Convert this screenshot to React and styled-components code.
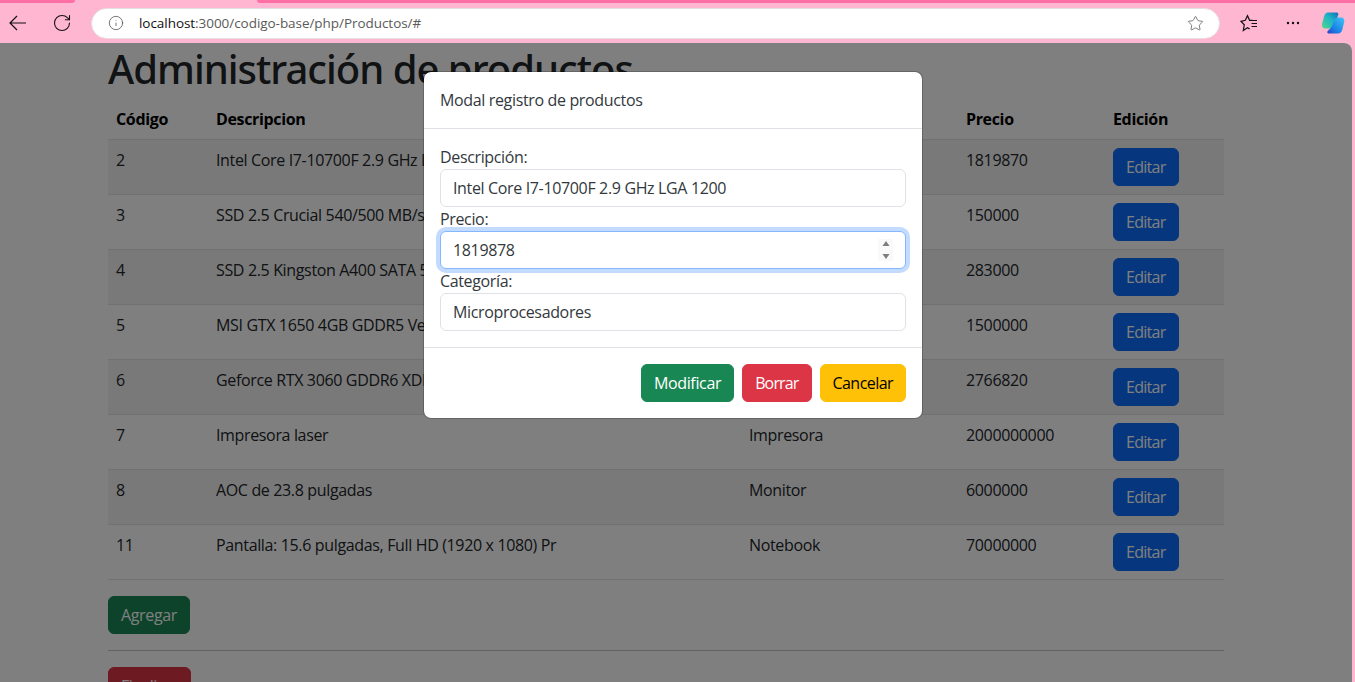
import React from "react";
import styled, { createGlobalStyle } from "styled-components";
import { Info, RotateCw, Star } from "lucide-react";

const products = [
  { id: 2, name: "Intel Core I7-10700F 2.9 GHz LGA 1200", category: "Microprocesadores", price: 1819870 },
  { id: 3, name: "SSD 2.5 Crucial 540/500 MB/s SATA", category: "Almacenamiento", price: 150000 },
  { id: 4, name: "SSD 2.5 Kingston A400 SATA 500 MB/s", category: "Almacenamiento", price: 283000 },
  { id: 5, name: "MSI GTX 1650 4GB GDDR5 Ventus", category: "Tarjeta de video", price: 1500000 },
  { id: 6, name: "Geforce RTX 3060 GDDR6 XDR", category: "Tarjeta de video", price: 2766820 },
  { id: 7, name: "Impresora laser", category: "Impresora", price: 2000000000 },
  { id: 8, name: "AOC de 23.8 pulgadas", category: "Monitor", price: 6000000 },
  { id: 11, name: "Pantalla: 15.6 pulgadas, Full HD (1920 x 1080) Pr", category: "Notebook", price: 70000000 },
];

const App = () => {
  return (
    <>
      <GlobalStyle />
      <Window>
        <TabStrip>
          <TabEdge />
          <ActiveTab />
          <TabEdge $right />
        </TabStrip>
        <NavBar>
          <NavIcon $left={5}>
            <svg width="20" height="20" viewBox="0 0 20 20" fill="none" stroke="#111" strokeWidth="1.2">
              <path d="M18 10H2M9 3l-7 7 7 7" />
            </svg>
          </NavIcon>
          <NavIcon $left={24}>
            <RotateCw size={20} strokeWidth={1.3} color="#111" />
          </NavIcon>
          <AddressBar>
            <Info size={16} strokeWidth={1.2} color="#555" />
            <Url>
              <b>localhost</b>:3000/codigo-base/php/Productos/#
            </Url>
            <Star size={17} strokeWidth={1.2} color="#666" />
          </AddressBar>
          <NavIcon $left={19}>
            <svg width="20" height="20" viewBox="0 0 20 20" fill="none" stroke="#111" strokeWidth="1.2">
              <path d="M13.500 7.400 10.600 7.300 8.500 2.700 6.300 7.300 2 8.300 5.300 11.800 4.300 17.500 8.500 14.700 10.700 16" />
              <path d="M12.500 7.500h5.500M12.500 10.500h5.500M12.500 13.500h5.500" />
            </svg>
          </NavIcon>
          <NavIcon $left={26}>
            <svg width="16" height="16" viewBox="0 0 16 16" fill="#111">
              <circle cx="3" cy="8" r="1.2" />
              <circle cx="8" cy="8" r="1.2" />
              <circle cx="13" cy="8" r="1.2" />
            </svg>
          </NavIcon>
          <NavIcon $left={19}>
            <svg width="26" height="26" viewBox="0 0 26 26">
              <defs>
                <linearGradient id="copilotA" x1="0" y1="1" x2="1" y2="0">
                  <stop offset="0" stopColor="#4fd98a" />
                  <stop offset="0.55" stopColor="#1fb5c4" />
                  <stop offset="1" stopColor="#0f6fb8" />
                </linearGradient>
                <linearGradient id="copilotB" x1="1" y1="0" x2="0" y2="1">
                  <stop offset="0" stopColor="#3fc4f5" />
                  <stop offset="0.6" stopColor="#1a86e8" />
                  <stop offset="1" stopColor="#2b3fc4" />
                </linearGradient>
              </defs>
              <path d="M8 2.500h8.500c1 0 1.700.6 2 1.500l-4.500 13c-.4 1-1.200 1.500-2.200 1.500H5.500C2.800 18.500 1.500 16.500 2 14L4.200 6C4.800 3.800 6 2.500 8 2.500z" fill="url(#copilotA)" />
              <path d="M18 7.500h3c2.500 0 3.800 2 3.200 4.500l-2 8c-.6 2.200-2 3.500-4 3.500H9c-1.200 0-1.800-.7-1.800-1.500.1-.5.5-.9 1-1.500 1.800-2 3.200-3 4.300-6L14.500 10c.5-1.600 1.800-2.500 3.500-2.500z" fill="url(#copilotB)" />
            </svg>
          </NavIcon>
        </NavBar>

        <Viewport>
          <Container>
            <Title>Administración de productos</Title>
            <Table>
              <colgroup>
                <col width="100" />
                <col width="533" />
                <col width="217" />
                <col width="147" />
                <col width="119" />
              </colgroup>
              <thead>
                <tr>
                  <Th>Código</Th>
                  <Th>Descripcion</Th>
                  <Th>Categoría</Th>
                  <Th>Precio</Th>
                  <Th>Edición</Th>
                </tr>
              </thead>
              <tbody>
                {products.map((product, index) => (
                  <tr key={product.id}>
                    <Td $striped={index % 2 === 0}>{product.id}</Td>
                    <Td $striped={index % 2 === 0}>{product.name}</Td>
                    <Td $striped={index % 2 === 0}>{product.category}</Td>
                    <Td $striped={index % 2 === 0}>{product.price}</Td>
                    <Td $striped={index % 2 === 0}>
                      <Button $bg="#0d6efd" $spacing="-0.72px">
                        Editar
                      </Button>
                    </Td>
                  </tr>
                ))}
              </tbody>
            </Table>
            <Button $bg="#198754" $spacing="-0.35px">
              Agregar
            </Button>
            <Divider />
            <Button $bg="#dc3545">Finalizar</Button>
          </Container>

          <Backdrop>
            <Modal>
              <ModalHeader>Modal registro de productos</ModalHeader>
              <ModalBody>
                <Label>Descripción:</Label>
                <Input type="text" defaultValue="Intel Core I7-10700F 2.9 GHz LGA 1200" />
                <Label>Precio:</Label>
                <NumberField>
                  <Input type="number" defaultValue="1819878" $focused />
                  <Spinner>
                    <svg width="8" height="5" viewBox="0 0 8 5" fill="#7d7d7d">
                      <path d="M4 0l3.500 5h-7z" />
                    </svg>
                    <svg width="8" height="5" viewBox="0 0 8 5" fill="#7d7d7d">
                      <path d="M.5 0h7L4 5z" />
                    </svg>
                  </Spinner>
                </NumberField>
                <Label>Categoría:</Label>
                <Input type="text" defaultValue="Microprocesadores" />
              </ModalBody>
              <ModalFooter>
                <Button $bg="#198754" $spacing="-0.35px">
                  Modificar
                </Button>
                <Button $bg="#dc3545" $spacing="-0.85px">
                  Borrar
                </Button>
                <Button $bg="#ffc107" $color="#000">
                  Cancelar
                </Button>
              </ModalFooter>
            </Modal>
          </Backdrop>
        </Viewport>
      </Window>
    </>
  );
};

export default App;

const GlobalStyle = createGlobalStyle`
  * {
    box-sizing: border-box;
  }
  body {
    margin: 0;
    background: #ffb6d0;
    font-family: "Open Sans", "Noto Sans", sans-serif;
    font-size: 16px;
    line-height: 1.5;
    color: #212529;
    letter-spacing: -0.35px;
    overflow: hidden;
  }
`;

const Window = styled.div`
  display: flex;
  flex-direction: column;
  height: 682px;
  overflow: hidden;
`;

const TabStrip = styled.div`
  display: flex;
  height: 3px;
  flex: none;
`;

const TabEdge = styled.div`
  flex: ${(props) => (props.$right ? "1" : "0 0 75px")};
  background: #ff6fa3;
  border-radius: ${(props) => (props.$right ? "0 0 0 4px" : "0 0 4px 0")};
`;

const ActiveTab = styled.div`
  flex: 0 0 182px;
`;

const NavBar = styled.div`
  display: flex;
  align-items: center;
  height: 40px;
  flex: none;
  padding: 0 0 0 3px;
`;

const NavIcon = styled.div`
  display: flex;
  margin-left: ${(props) => props.$left}px;
  align-items: center;
`;

const AddressBar = styled.div`
  display: flex;
  align-items: center;
  width: 1129px;
  height: 31px;
  margin-left: 19px;
  padding: 0 15px 0 16px;
  background: #fff;
  border: 1px solid #e4dfe1;
  border-radius: 16px;
`;

const Url = styled.div`
  flex: 1;
  margin-left: 15px;
  font-size: 13.5px;
  letter-spacing: -0.05px;
  color: #5a5a5a;

  b {
    font-weight: 400;
    color: #111;
  }
`;

const Viewport = styled.div`
  position: relative;
  flex: 1;
  margin-right: 3px;
  overflow: hidden;
  background: #fff;
  border-top-right-radius: 8px;
`;

const Container = styled.div`
  width: 1116px;
  margin-left: 108px;
`;

const Title = styled.h1`
  margin: 0 0 6px;
  padding-top: 2px;
  font-family: "Noto Sans", sans-serif;
  font-size: 40px;
  font-weight: 500;
  line-height: 48px;
  letter-spacing: -1px;
`;

const Table = styled.table`
  width: 100%;
  margin-bottom: 16px;
  border-collapse: collapse;
  table-layout: fixed;
`;

const Th = styled.th`
  padding: 8px;
  text-align: left;
  font-weight: 700;
  color: #000;
  border-bottom: 1px solid #dee2e6;
`;

const Td = styled.td`
  padding: 8px;
  vertical-align: top;
  white-space: nowrap;
  overflow: hidden;
  background: ${(props) => (props.$striped ? "rgba(0, 0, 0, 0.05)" : "transparent")};
  border-bottom: 1px solid #dee2e6;
`;

const Button = styled.button`
  display: inline-block;
  height: 38px;
  padding: 6px 12px;
  font: inherit;
  letter-spacing: ${(props) => props.$spacing || "-0.55px"};
  color: ${(props) => props.$color || "#fff"};
  background: ${(props) => props.$bg};
  border: 1px solid ${(props) => props.$bg};
  border-radius: 6px;
`;

const Divider = styled.hr`
  height: 1px;
  margin: 16px 0;
  background: #c6c7c8;
  border: 0;
`;

const Backdrop = styled.div`
  position: absolute;
  inset: 0;
  background: rgba(0, 0, 0, 0.5);
`;

const Modal = styled.div`
  width: 500px;
  margin: 28px 0 0 423px;
  color: #33383d;
  background: #fff;
  border: 1px solid rgba(0, 0, 0, 0.2);
  border-radius: 8px;
  background-clip: padding-box;
`;

const ModalHeader = styled.div`
  padding: 16px;
  border-bottom: 1px solid #dee2e6;
`;

const ModalBody = styled.div`
  padding: 16px;
`;

const Label = styled.label`
  display: block;
`;

const Input = styled.input`
  display: block;
  width: 100%;
  height: 38px;
  padding: 6px 12px;
  font: inherit;
  letter-spacing: inherit;
  color: #33383d;
  background: #fff;
  outline: none;
  border: 1px solid ${(props) => (props.$focused ? "#86b7fe" : "#dee2e6")};
  border-radius: 6px;
  box-shadow: ${(props) => (props.$focused ? "0 0 0 4px rgba(13, 110, 253, 0.25)" : "none")};
  appearance: textfield;

  &::-webkit-inner-spin-button {
    appearance: none;
  }
`;

const NumberField = styled.div`
  position: relative;
`;

const Spinner = styled.div`
  position: absolute;
  top: 8px;
  right: 13px;
  display: flex;
  flex-direction: column;
  align-items: center;
  justify-content: space-between;
  width: 15px;
  height: 22px;
  padding: 2px 0;
  background: #f9f9f9;
`;

const ModalFooter = styled.div`
  display: flex;
  justify-content: flex-end;
  gap: 8px;
  padding: 16px;
  border-top: 1px solid #dee2e6;
`;
